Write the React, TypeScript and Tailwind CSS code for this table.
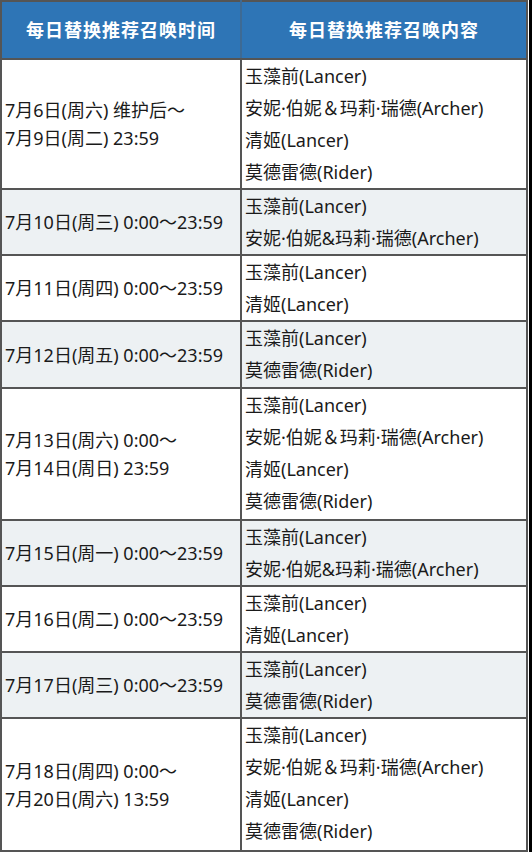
const rows: { time: string[]; units: string[]; pad?: string }[] = [
  {
    time: ["7月6日(周六) 维护后～", "7月9日(周二) 23:59"],
    units: ["玉藻前(Lancer)", "安妮·伯妮＆玛莉·瑞德(Archer)", "清姬(Lancer)", "莫德雷德(Rider)"],
  },
  { time: ["7月10日(周三) 0:00～23:59"], units: ["玉藻前(Lancer)", "安妮·伯妮&玛莉·瑞德(Archer)"] },
  { time: ["7月11日(周四) 0:00～23:59"], units: ["玉藻前(Lancer)", "清姬(Lancer)"] },
  { time: ["7月12日(周五) 0:00～23:59"], units: ["玉藻前(Lancer)", "莫德雷德(Rider)"], pad: "pb-px" },
  {
    time: ["7月13日(周六) 0:00～", "7月14日(周日) 23:59"],
    units: ["玉藻前(Lancer)", "安妮·伯妮＆玛莉·瑞德(Archer)", "清姬(Lancer)", "莫德雷德(Rider)"],
    pad: "pb-[2px]",
  },
  { time: ["7月15日(周一) 0:00～23:59"], units: ["玉藻前(Lancer)", "安妮·伯妮&玛莉·瑞德(Archer)"] },
  { time: ["7月16日(周二) 0:00～23:59"], units: ["玉藻前(Lancer)", "清姬(Lancer)"] },
  { time: ["7月17日(周三) 0:00～23:59"], units: ["玉藻前(Lancer)", "莫德雷德(Rider)"] },
  {
    time: ["7月18日(周四) 0:00～", "7月20日(周六) 13:59"],
    units: ["玉藻前(Lancer)", "安妮·伯妮＆玛莉·瑞德(Archer)", "清姬(Lancer)", "莫德雷德(Rider)"],
    pad: "pb-[3px]",
  },
];

export default function App() {
  return (
    <div
      className="flex w-[532px] bg-white text-[#1a1a1a]"
      style={{ fontFamily: '"Noto Sans", "Noto Sans CJK SC", sans-serif' }}
    >
      <table className="w-[528px] table-fixed border-collapse border-2 border-[#555]">
        <colgroup>
          <col className="w-[240px]" />
          <col />
        </colgroup>
        <thead>
          <tr className="h-[58px] bg-[#2e75b6] text-white">
            <th className="border-2 border-[#555] border-r-[#3d6a94] text-[18px] font-bold tracking-[1px]">
              每日替换推荐召唤时间
            </th>
            <th className="border-2 border-[#555] border-l-[#3d6a94] text-[18px] font-bold tracking-[1px]">
              每日替换推荐召唤内容
            </th>
          </tr>
        </thead>
        <tbody>
          {rows.map((row, i) => (
            <tr key={i} className={i % 2 === 1 ? "bg-[#edf1f3]" : "bg-white"}>
              <td className="border-2 border-[#555] pl-[3px] align-middle text-[18px] leading-[28px] whitespace-nowrap">
                {row.time.map((t) => (
                  <div key={t}>{t}</div>
                ))}
              </td>
              <td
                className={`border-2 border-[#555] pl-[3px] pt-0 align-top text-[18px] leading-[32px] whitespace-nowrap ${row.pad ?? "pb-0"}`}
              >
                {row.units.map((u) => (
                  <div key={u}>{u}</div>
                ))}
              </td>
            </tr>
          ))}
        </tbody>
      </table>
      <div className="w-px" />
      <div className="w-[3px] bg-black" />
    </div>
  );
}
